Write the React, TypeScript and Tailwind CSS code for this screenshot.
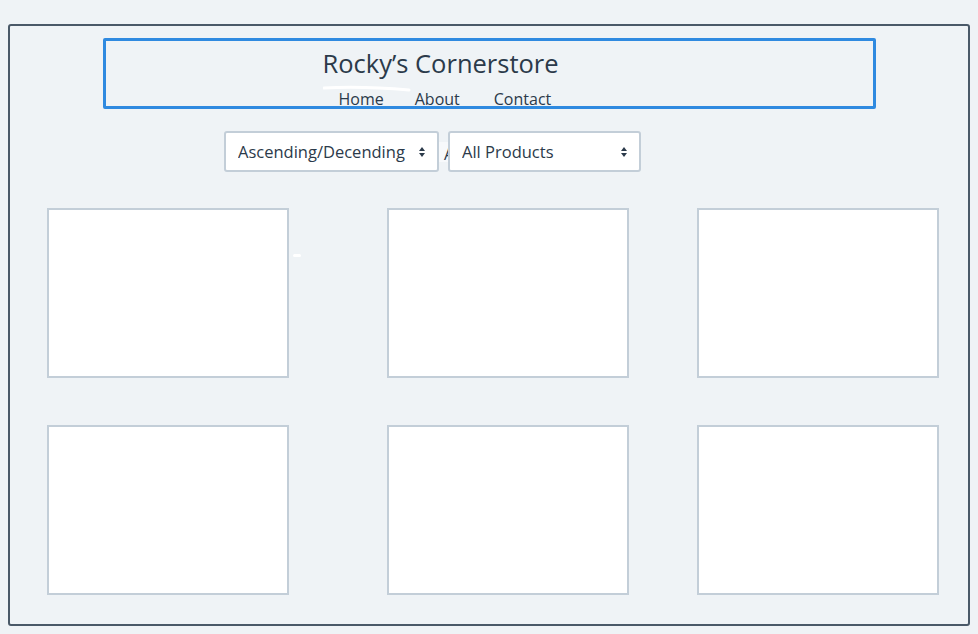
import React from "react";

const font = { fontFamily: '"Open Sans", "Liberation Sans", sans-serif' };

function Arrows() {
  return (
    <svg width="6" height="12" viewBox="0 0 6 12" className="pointer-events-none absolute right-[12px] top-1/2 -translate-y-1/2">
      <path d="M3 1 L6 5 L0 5 Z" fill="#2b3a4a" />
      <path d="M3 11 L6 7 L0 7 Z" fill="#2b3a4a" />
    </svg>
  );
}

function FakeSelect({ label, width }: { label: string; width: string }) {
  return (
    <div className={`relative h-[41px] ${width} rounded-[3px] border-2 border-[#c3ced8] bg-white`}>
      <select className="h-full w-full appearance-none bg-transparent pl-[12px] pt-[1px] text-[16.5px] text-[#2b3a4a] outline-none">
        <option>{label}</option>
      </select>
      <Arrows />
    </div>
  );
}

function Card() {
  return <div className="h-[170px] w-[242px] border-2 border-[#c3ced8] bg-white" />;
}

export default function App() {
  return (
    <div className="min-h-[634px] w-[978px] bg-[#eff3f6] pt-[24px] text-[#2b3a4a]" style={font}>
      <div className="relative mx-[8px] h-[602px] rounded-[3px] border-2 border-[#4a5968]">
        {/* Header */}
        <div className="relative mx-auto mt-[12px] h-[71px] w-[773px] rounded-[2px] border-[3px] border-[#2f8ae0]">
          <div className="pl-[217px] pt-[6px] text-[25.5px] leading-[32px]">Rocky&rsquo;s Cornerstore</div>
          <nav className="flex pl-[233px] pt-[10px] text-[16px] leading-[20px]">
            <span>Home</span>
            <span className="ml-[31px]">About</span>
            <span className="ml-[34px]">Contact</span>
          </nav>
          <svg className="absolute left-[217px] top-[44px]" width="90" height="8" viewBox="0 0 90 8">
            <path d="M1 3 Q40 1 86 5" stroke="#ffffff" strokeWidth="3" fill="none" strokeLinecap="round" />
          </svg>
        </div>

        {/* Filters */}
        <div className="mt-[22px] flex pl-[214px]">
          <FakeSelect label="Ascending/Decending" width="w-[215px]" />
          <div className="mt-[11px] h-[20px] w-[9px] overflow-hidden bg-[#f7f9fb] pl-[5px] text-[16px] leading-[24px]">A</div>
          <FakeSelect label="All Products" width="w-[193px]" />
        </div>

        {/* Product grid */}
        <div className="mt-[36px] flex flex-col gap-[47px] pl-[37px]">
          <div className="flex">
            <Card />
            <div className="ml-[98px]"><Card /></div>
            <div className="ml-[68px]"><Card /></div>
          </div>
          <div className="flex">
            <Card />
            <div className="ml-[98px]"><Card /></div>
            <div className="ml-[68px]"><Card /></div>
          </div>
        </div>

        <div className="absolute left-[283px] top-[228px] h-[3px] w-[8px] rounded-full bg-white" />
      </div>
    </div>
  );
}
